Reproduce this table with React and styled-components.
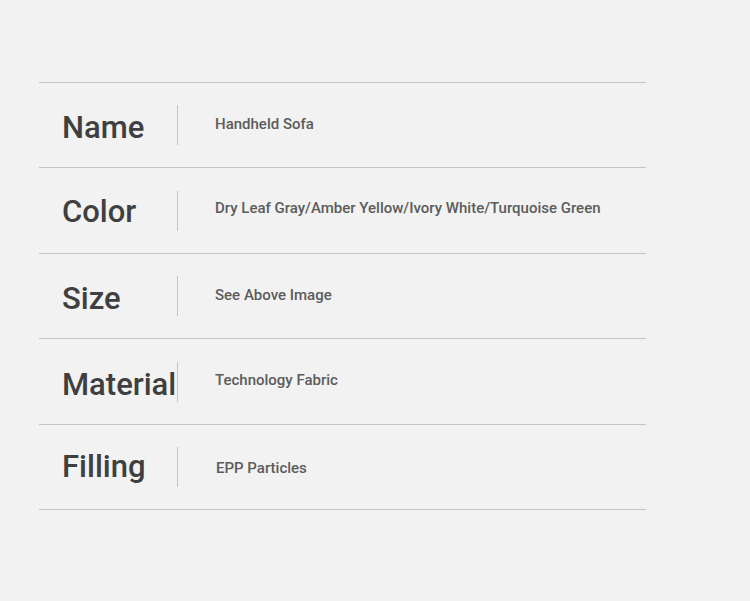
import React from 'react'
import styled, { createGlobalStyle } from 'styled-components'

const GlobalStyle = createGlobalStyle`
  html, body {
    margin: 0;
    padding: 0;
    background: #f2f2f2;
    font-family: Roboto, "Liberation Sans", sans-serif;
  }
`

const Page = styled.div`
  width: 750px;
  height: 601px;
  padding: 82px 0 0 39px;
  box-sizing: border-box;
`

const Table = styled.div`
  width: 607px;
  border-top: 1px solid #c4c4c4;
`

const Row = styled.div`
  display: flex;
  align-items: center;
  box-sizing: border-box;
  height: ${props => props.h}px;
  border-bottom: 1px solid #c4c4c4;
`

const Label = styled.div`
  width: 115px;
  padding-left: 23px;
  font-size: 31px;
  font-weight: 500;
  color: #3f3f3f;
  white-space: nowrap;
  margin-top: ${props => props.dy || 0}px;
`

const Divider = styled.div`
  width: 1px;
  height: 40px;
  background: #c4c4c4;
  flex-shrink: 0;
`

const Value = styled.div`
  padding-left: ${props => props.px || 37}px;
  font-size: 15px;
  font-weight: 500;
  color: #5c5c5c;
  margin-top: ${props => props.dy || 0}px;
`

const specs = [
  { label: 'Name', value: 'Handheld Sofa', h: 85, ly: 4, vy: -2 },
  { label: 'Color', value: 'Dry Leaf Gray/Amber Yellow/Ivory White/Turquoise Green', h: 86, ly: 2, vy: -6 },
  { label: 'Size', value: 'See Above Image', h: 85, ly: 4, vy: -2 },
  { label: 'Material', value: 'Technology Fabric', h: 86, ly: 6, vy: -4 },
  { label: 'Filling', value: 'EPP Particles', h: 85, ly: -2, vy: 2, px: 38 },
]

export default function App() {
  return (
    <Page>
      <GlobalStyle />
      <Table>
        {specs.map(s => (
          <Row key={s.label} h={s.h}>
            <Label dy={s.ly}>{s.label}</Label>
            <Divider />
            <Value dy={s.vy} px={s.px}>{s.value}</Value>
          </Row>
        ))}
      </Table>
    </Page>
  )
}
